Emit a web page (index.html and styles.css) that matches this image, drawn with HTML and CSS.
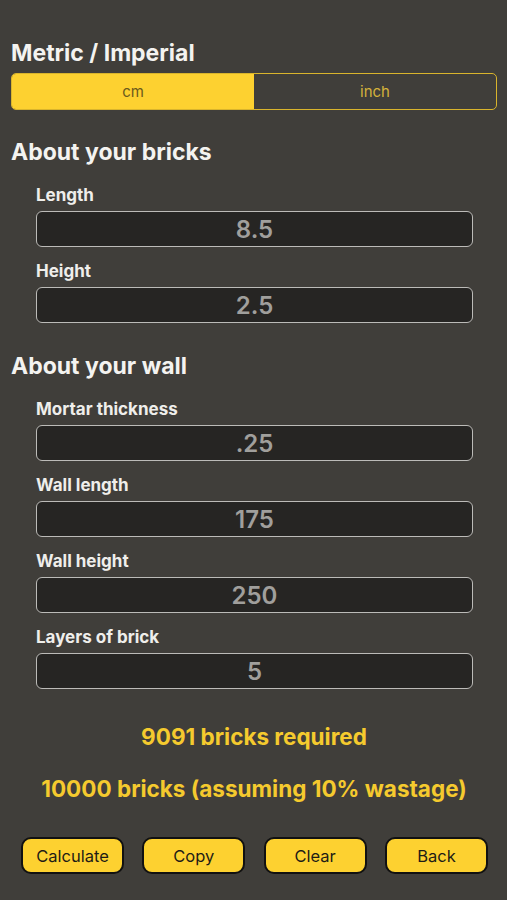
FILE: index.html
```html
<!DOCTYPE html>
<html>
<head>
<meta charset="utf-8">
<link rel="stylesheet" href="styles.css">
</head>
<body>
<div class="page">
  <h1 class="title">Metric / Imperial</h1>
  <div class="segment">
    <div class="seg seg-on">cm</div>
    <div class="seg seg-off">inch</div>
  </div>

  <h2 class="section first">About your bricks</h2>
  <div class="fields">
    <div class="field">
      <div class="label">Length</div>
      <div class="input">8.5</div>
    </div>
    <div class="field">
      <div class="label">Height</div>
      <div class="input">2.5</div>
    </div>
  </div>

  <h2 class="section">About your wall</h2>
  <div class="fields">
    <div class="field">
      <div class="label">Mortar thickness</div>
      <div class="input">.25</div>
    </div>
    <div class="field">
      <div class="label">Wall length</div>
      <div class="input">175</div>
    </div>
    <div class="field">
      <div class="label">Wall height</div>
      <div class="input">250</div>
    </div>
    <div class="field">
      <div class="label">Layers of brick</div>
      <div class="input">5</div>
    </div>
  </div>

  <div class="results">
    <div class="result">9091 bricks required</div>
    <div class="result">10000 bricks (assuming 10% wastage)</div>
  </div>

  <div class="buttons">
    <div class="btn">Calculate</div>
    <div class="btn">Copy</div>
    <div class="btn">Clear</div>
    <div class="btn">Back</div>
  </div>
</div>
</body>
</html>
```

FILE: styles.css
```css
html, body {
  margin: 0;
  padding: 0;
  background: #403e3a;
}
body {
  width: 507px;
  height: 900px;
  overflow: hidden;
  font-family: Inter, "Noto Sans", "Liberation Sans", sans-serif;
}
.page {
  padding: 40px 10px 0 11px;
}
.title, .section {
  margin: 0;
  font-size: 23px;
  line-height: 26px;
  font-weight: 700;
  color: #f4f3f0;
}
.segment {
  margin-top: 7px;
  height: 37px;
  box-sizing: border-box;
  border: 1.5px solid #d9b42c;
  border-radius: 5px;
  display: flex;
  overflow: hidden;
}
.seg {
  flex: 1;
  display: flex;
  align-items: center;
  justify-content: center;
  font-size: 15px;
}
.seg-on {
  background: #fdd130;
  color: #6b5a1c;
}
.seg-off {
  color: #d4b23a;
}
.section {
  margin-top: 29px;
}
.section + .fields {
  margin-top: 20px;
}
.section:not(.first) {
  margin-top: 30px;
}
.fields {
  padding: 0 24px 0 25px;
  display: flex;
  flex-direction: column;
  gap: 14px;
}
.field {
  display: flex;
  flex-direction: column;
  gap: 6px;
}
.label {
  font-size: 17px;
  line-height: 20px;
  font-weight: 700;
  color: #efeeeb;
}
.input {
  height: 36px;
  box-sizing: border-box;
  border: 1.5px solid #bcbbb8;
  border-radius: 6px;
  background: #262523;
  color: #a09f9c;
  font-size: 24px;
  font-weight: 600;
  display: flex;
  align-items: center;
  justify-content: center;
}
.results {
  margin-top: 35px;
  display: flex;
  flex-direction: column;
  gap: 26px;
  align-items: center;
}
.result {
  font-size: 22.5px;
  line-height: 26px;
  font-weight: 700;
  color: #f5ca2e;
}
.buttons {
  margin-top: 35px;
  padding: 0 9px 0 10px;
  display: flex;
  justify-content: space-between;
}
.btn {
  width: 103px;
  height: 37px;
  box-sizing: border-box;
  border: 2px solid #111;
  border-radius: 10px;
  background: #fdd130;
  color: #1e1c16;
  font-size: 16.5px;
  display: flex;
  align-items: center;
  justify-content: center;
}
```
